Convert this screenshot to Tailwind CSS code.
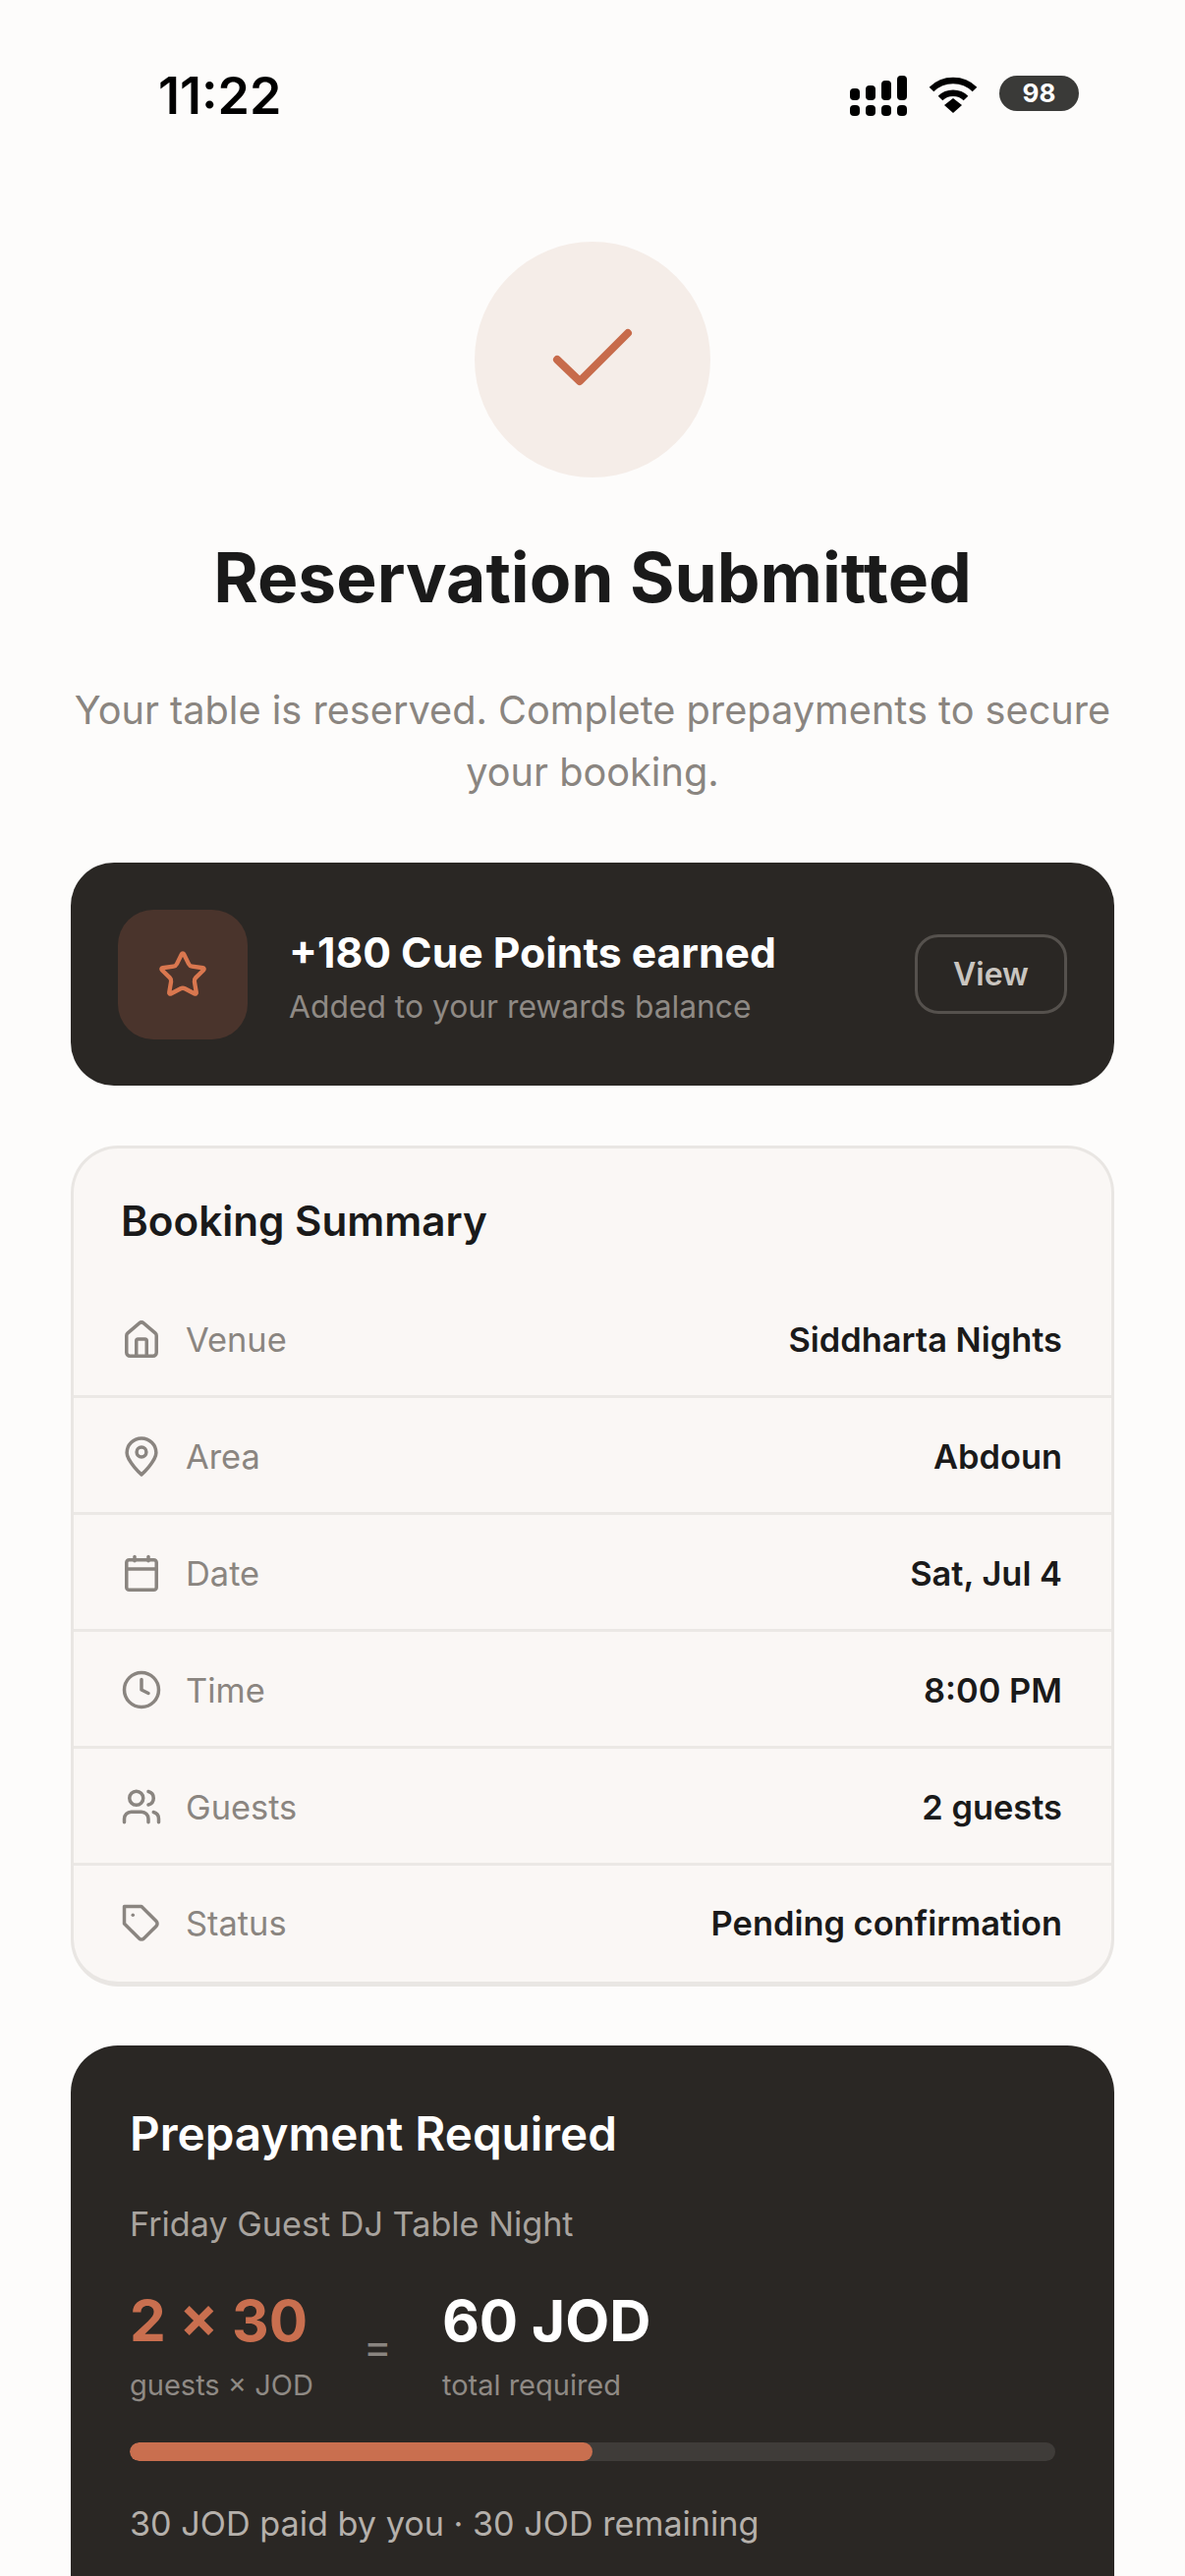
<!doctype html>
<html><head><meta charset="utf-8"><script src="https://cdn.jsdelivr.net/npm/@tailwindcss/browser@4"></script></head>
<body class="m-0 bg-[#fdfcfb]">
<div class="w-[1206px] h-[2622px] overflow-hidden bg-[#fdfcfb] font-['Inter',sans-serif] text-[#1a1a1a]">
  <div class="flex justify-between items-center h-[194px] pl-[161px] pr-[108px]">
    <span class="text-[52px] font-semibold text-black leading-none mt-[1px]">11:22</span>
    <div class="flex items-start self-start mt-[77px]">
      <svg width="58" height="43" viewBox="0 0 58 43" fill="#000" class="block"><rect x="0" y="13" width="10" height="12" rx="4"/><rect x="16" y="10" width="10" height="15" rx="4"/><rect x="32" y="5" width="10" height="20" rx="4"/><rect x="48" y="0" width="10" height="25" rx="4"/><rect x="0" y="30" width="10" height="11" rx="4"/><rect x="16" y="30" width="10" height="11" rx="4"/><rect x="32" y="30" width="10" height="11" rx="4"/><rect x="48" y="30" width="10" height="11" rx="4"/></svg>
      <svg width="50" height="38" viewBox="0 0 50 38" class="block ml-[22px] mt-[1px]" fill="none" stroke="#000" stroke-width="6.5"><path d="M3 13C15 1 35 1 47 13"/><path d="M12 22C19 15 31 15 38 22"/><path d="M16 29 25 22 34 29 25 37Z" fill="#000" stroke="none"/></svg>
      <div class="ml-[22px] w-[81px] h-[36px] rounded-full bg-[#3a3a38] text-white text-[26px] font-bold flex items-center justify-center leading-none">98</div>
    </div>
  </div>
  <div class="flex flex-col items-center">
    <div class="mt-[52px] w-[240px] h-[240px] rounded-full bg-[#f5ede8] flex items-center justify-center">
      <svg width="120" height="120" viewBox="0 0 120 120" fill="none" stroke="#c76b4b" stroke-width="8" stroke-linecap="round" stroke-linejoin="round"><path d="M24 60 47 82 96 33"/></svg>
    </div>
    <h1 class="mt-[61px] text-[69.5px] leading-[82px] font-bold text-[#1a1a1a]">Reservation Submitted</h1>
    <p class="mt-[63px] w-[1080px] text-center text-[39.7px] leading-[63px] text-[#8a8580]">Your table is reserved. Complete prepayments to secure your booking.</p>
  </div>
  <div class="mx-[72px] mt-[60px]">
    <div class="h-[227px] rounded-[44px] bg-[#2a2724] flex items-center px-[48px]">
      <div class="w-[132px] h-[132px] rounded-[36px] bg-[#4a342c] flex items-center justify-center shrink-0">
        <svg width="52" height="52" viewBox="0 0 24 24" fill="none" stroke="#d9774f" stroke-width="2" stroke-linecap="round" stroke-linejoin="round"><path d="M11.525 2.295a.53.53 0 0 1 .95 0l2.31 4.679a2.123 2.123 0 0 0 1.595 1.16l5.166.756a.53.53 0 0 1 .294.904l-3.736 3.638a2.123 2.123 0 0 0-.611 1.878l.882 5.14a.53.53 0 0 1-.771.56l-4.618-2.428a2.122 2.122 0 0 0-1.973 0L6.396 21.01a.53.53 0 0 1-.77-.56l.881-5.139a2.122 2.122 0 0 0-.611-1.879L2.16 9.795a.53.53 0 0 1 .294-.906l5.165-.755a2.122 2.122 0 0 0 1.597-1.16z"/></svg>
      </div>
      <div class="ml-[42px] flex-1 pt-[5px]">
        <div class="text-[42.7px] leading-[52px] font-bold text-white">+180 Cue Points earned</div>
        <div class="mt-[9px] text-[31.8px] leading-[40px] text-[#8f8a85]">Added to your rewards balance</div>
      </div>
      <div class="w-[155px] h-[81px] rounded-[24px] border-[3px] border-[#55514d] flex items-center justify-center text-[32px] font-semibold text-[#c9c5c0]">View</div>
    </div>
    <div class="mt-[61px] h-[856px] rounded-[48px] border-[3px] border-b-[5px] border-[#e9e6e3] bg-[#faf7f5] overflow-hidden">
      <div class="h-[135px] pl-[48px] pt-[49px] text-[42.2px] leading-[50px] font-semibold text-[#1a1a1a]">Booking Summary</div>
      <div class="h-[119px] pt-[3px] flex items-center justify-between pl-[48px] pr-[50px] border-b-[3px] border-[#ebe8e5]">
        <div class="flex items-center gap-[24px] text-[34.4px] text-[#8a8580]"><svg width="42" height="42" viewBox="0 0 24 24" fill="none" stroke="#8a8580" stroke-width="2" stroke-linecap="round" stroke-linejoin="round"><path d="M15 21.85V13a1 1 0 0 0-1-1h-4a1 1 0 0 0-1 1v8.85"/><path d="M3.3 10a2 2 0 0 1 .7-1.5L10.7 2.8a2 2 0 0 1 2.6 0L20 8.5a2 2 0 0 1 .7 1.5v9.85a2 2 0 0 1-2 2H5.3a2 2 0 0 1-2-2z"/></svg>Venue</div>
        <div class="text-[34.4px] font-semibold text-[#1a1a1a]">Siddharta Nights</div>
      </div>
      <div class="h-[119px] pt-[3px] flex items-center justify-between pl-[48px] pr-[50px] border-b-[3px] border-[#ebe8e5]">
        <div class="flex items-center gap-[24px] text-[34.4px] text-[#8a8580]"><svg width="42" height="42" viewBox="0 0 24 24" fill="none" stroke="#8a8580" stroke-width="2" stroke-linecap="round" stroke-linejoin="round"><path d="M20.5 10.2C20.5 15 12 22.8 12 22.8S3.5 15 3.5 10.2a8.5 8.5 0 0 1 17 0Z"/><circle cx="12" cy="9.7" r="2.8"/></svg>Area</div>
        <div class="text-[34.4px] font-semibold text-[#1a1a1a]">Abdoun</div>
      </div>
      <div class="h-[119px] pt-[3px] flex items-center justify-between pl-[48px] pr-[50px] border-b-[3px] border-[#ebe8e5]">
        <div class="flex items-center gap-[24px] text-[34.4px] text-[#8a8580]"><svg width="42" height="42" viewBox="0 0 24 24" fill="none" stroke="#8a8580" stroke-width="2" stroke-linecap="round" stroke-linejoin="round"><path d="M8 2.6V5"/><path d="M16 2.6V5"/><rect width="17.4" height="17.5" x="3.3" y="4.4" rx="1.5"/><path d="M3.3 9.7h17.4"/></svg>Date</div>
        <div class="text-[34.4px] font-semibold text-[#1a1a1a]">Sat, Jul 4</div>
      </div>
      <div class="h-[119px] pt-[3px] flex items-center justify-between pl-[48px] pr-[50px] border-b-[3px] border-[#ebe8e5]">
        <div class="flex items-center gap-[24px] text-[34.4px] text-[#8a8580]"><svg width="42" height="42" viewBox="0 0 24 24" fill="none" stroke="#8a8580" stroke-width="2" stroke-linecap="round" stroke-linejoin="round"><circle cx="12" cy="12" r="10"/><path d="M12 6v6l4 2"/></svg>Time</div>
        <div class="text-[34.4px] font-semibold text-[#1a1a1a]">8:00 PM</div>
      </div>
      <div class="h-[119px] pt-[3px] flex items-center justify-between pl-[48px] pr-[50px] border-b-[3px] border-[#ebe8e5]">
        <div class="flex items-center gap-[24px] text-[34.4px] text-[#8a8580]"><svg width="42" height="42" viewBox="0 0 24 24" fill="none" stroke="#8a8580" stroke-width="2" stroke-linecap="round" stroke-linejoin="round"><path d="M16 21v-2a4 4 0 0 0-4-4H6a4 4 0 0 0-4 4v2"/><circle cx="9" cy="7" r="4"/><path d="M22 21v-2a4 4 0 0 0-3-3.87"/><path d="M16 3.13a4 4 0 0 1 0 7.75"/></svg>Guests</div>
        <div class="text-[34.4px] font-semibold text-[#1a1a1a]">2 guests</div>
      </div>
      <div class="h-[118px] flex items-center justify-between pl-[48px] pr-[50px]">
        <div class="flex items-center gap-[24px] text-[34.4px] text-[#8a8580]"><svg width="42" height="42" viewBox="0 0 24 24" fill="none" stroke="#8a8580" stroke-width="2" stroke-linecap="round" stroke-linejoin="round"><path d="M20.59 13.41l-7.17 7.17a2 2 0 0 1-2.83 0L2 12V2h10l8.59 8.59a2 2 0 0 1 0 2.82z"/><path d="M7 7h.01"/></svg>Status</div>
        <div class="text-[34.4px] font-semibold text-[#1a1a1a]">Pending confirmation</div>
      </div>
    </div>
    <div class="mt-[60px] h-[600px] rounded-[48px] bg-[#2a2724] px-[60px] pt-[62px]">
      <div class="text-[47.6px] leading-[56px] font-semibold text-white">Prepayment Required</div>
      <div class="mt-[44px] text-[34.2px] leading-[40px] text-[#a8a39e]">Friday Guest DJ Table Night</div>
      <div class="mt-[42px] flex items-start">
        <div>
          <div class="text-[58.4px] leading-[72px] font-bold text-[#c96f4f]">2 × 30</div>
          <div class="mt-[12px] text-[29px] leading-[36px] text-[#8f8a85]">guests × JOD</div>
        </div>
        <div class="ml-[51px] mt-[38px] text-[44px] leading-[48px] text-[#8a8580]">=</div>
        <div class="ml-[51px]">
          <div class="text-[58.4px] leading-[72px] font-bold text-white">60 JOD</div>
          <div class="mt-[12px] text-[29px] leading-[36px] text-[#8f8a85]">total required</div>
        </div>
      </div>
      <div class="mt-[40px] h-[19px] rounded-full bg-[#3f3c39] overflow-hidden"><div class="w-1/2 h-full rounded-full bg-[#c96f4f]"></div></div>
      <div class="mt-[43px] text-[34.2px] leading-[42px] text-[#b5b0ab]">30 JOD paid by you · 30 JOD remaining</div>
    </div>
  </div>
</div>
</body></html>
